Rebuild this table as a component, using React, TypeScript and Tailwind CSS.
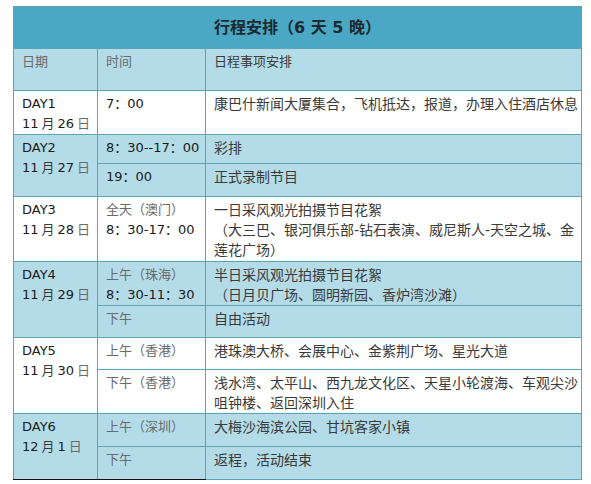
/**
 * ItineraryTable — 6-day / 5-night schedule rendered as a bordered table.
 */

type Sub = { time: React.ReactNode; plan: React.ReactNode; h: number };

interface Day {
  day: string;
  date: [string, string];
  bg: "white" | "blue";
  subs: Sub[];
}

const cellBorder = "border border-[#5ea3b6]";
const pad = "align-top pl-[8px] pr-[4px] pt-[3px]";

function Cjk({ children, gray }: { children: React.ReactNode; gray?: boolean }) {
  return <span className={gray ? "text-[#6a6a6a]" : "text-[#3a3a3a]"}>{children}</span>;
}

const DAYS: Day[] = [
  {
    day: "DAY1",
    date: ["11", "26"],
    bg: "white",
    subs: [
      { time: "7：00", plan: <Cjk>康巴什新闻大厦集合，飞机抵达，报道，办理入住酒店休息</Cjk>, h: 43 },
    ],
  },
  {
    day: "DAY2",
    date: ["11", "27"],
    bg: "blue",
    subs: [
      { time: "8：30--17：00", plan: <Cjk>彩排</Cjk>, h: 29 },
      { time: "19：00", plan: <Cjk>正式录制节目</Cjk>, h: 33 },
    ],
  },
  {
    day: "DAY3",
    date: ["11", "28"],
    bg: "white",
    subs: [
      {
        time: (
          <>
            <Cjk gray>全天（澳门）</Cjk>
            <br />
            8：30-17：00
          </>
        ),
        plan: (
          <Cjk>
            一日采风观光拍摄节目花絮
            <br />
            （大三巴、银河俱乐部-钻石表演、威尼斯人-天空之城、金
            <br />
            莲花广场）
          </Cjk>
        ),
        h: 65,
      },
    ],
  },
  {
    day: "DAY4",
    date: ["11", "29"],
    bg: "blue",
    subs: [
      {
        time: (
          <>
            <Cjk gray>上午（珠海）</Cjk>
            <br />
            8：30-11：30
          </>
        ),
        plan: (
          <Cjk>
            半日采风观光拍摄节目花絮
            <br />
            （日月贝广场、圆明新园、香炉湾沙滩）
          </Cjk>
        ),
        h: 43,
      },
      { time: <Cjk gray>下午</Cjk>, plan: <Cjk>自由活动</Cjk>, h: 32 },
    ],
  },
  {
    day: "DAY5",
    date: ["11", "30"],
    bg: "white",
    subs: [
      { time: <Cjk gray>上午（香港）</Cjk>, plan: <Cjk>港珠澳大桥、会展中心、金紫荆广场、星光大道</Cjk>, h: 32 },
      {
        time: <Cjk gray>下午（香港）</Cjk>,
        plan: (
          <Cjk>
            浅水湾、太平山、西九龙文化区、天星小轮渡海、车观尖沙
            <br />
            咀钟楼、返回深圳入住
          </Cjk>
        ),
        h: 43,
      },
    ],
  },
  {
    day: "DAY6",
    date: ["12", "1"],
    bg: "blue",
    subs: [
      { time: <Cjk gray>上午（深圳）</Cjk>, plan: <Cjk>大梅沙海滨公园、甘坑客家小镇</Cjk>, h: 33 },
      { time: <Cjk gray>下午</Cjk>, plan: <Cjk>返程，活动结束</Cjk>, h: 33 },
    ],
  },
];

export default function App() {
  return (
    <div className="w-[591px] h-[484px] bg-white pl-[13px] pt-[6px] font-['DejaVu_Sans','Noto_Sans_CJK_SC',sans-serif] text-[13px] leading-[20px] text-[#1a1a1a]">
      <table className="w-[568px] border-collapse table-fixed">
        <colgroup>
          <col className="w-[84px]" />
          <col className="w-[108px]" />
          <col className="w-[376px]" />
        </colgroup>
        <tbody>
          {/* Title */}
          <tr className="h-[42px]">
            <td colSpan={3} className={`${cellBorder} bg-[#4aa8c4] text-center align-middle text-[16px] font-bold text-[#1c2a30]`}>
              行程安排（6 天 5 晚）
            </td>
          </tr>
          {/* Column headers */}
          <tr className="h-[42px] bg-[#b4dce8]">
            <td className={`${cellBorder} border-t-white ${pad}`}><Cjk gray>日期</Cjk></td>
            <td className={`${cellBorder} border-t-white ${pad}`}><Cjk gray>时间</Cjk></td>
            <td className={`${cellBorder} border-t-white ${pad}`}><Cjk>日程事项安排</Cjk></td>
          </tr>
          {DAYS.map((d, di) => {
            const bg = d.bg === "white" ? "bg-white" : "bg-[#b4dce8]";
            const last = di === DAYS.length - 1;
            return d.subs.map((s, si) => (
              <tr key={`${d.day}-${si}`} className={bg} style={{ height: s.h }}>
                {si === 0 && (
                  <td
                    rowSpan={d.subs.length}
                    className={`${cellBorder} ${pad} ${last ? "border-b-[#111]" : ""}`}
                  >
                    {d.day}
                    <br />
                    {d.date[0]}
                    <span className="mx-[3px]"><Cjk>月</Cjk></span>
                    {d.date[1]}
                    <span className="ml-[3px]"><Cjk gray>日</Cjk></span>
                  </td>
                )}
                <td className={`${cellBorder} ${pad} whitespace-nowrap ${last && si === d.subs.length - 1 ? "border-b-[#111]" : ""}`}>
                  {s.time}
                </td>
                <td className={`${cellBorder} ${pad} whitespace-nowrap text-[14px]`}>{s.plan}</td>
              </tr>
            ));
          })}
        </tbody>
      </table>
    </div>
  );
}
